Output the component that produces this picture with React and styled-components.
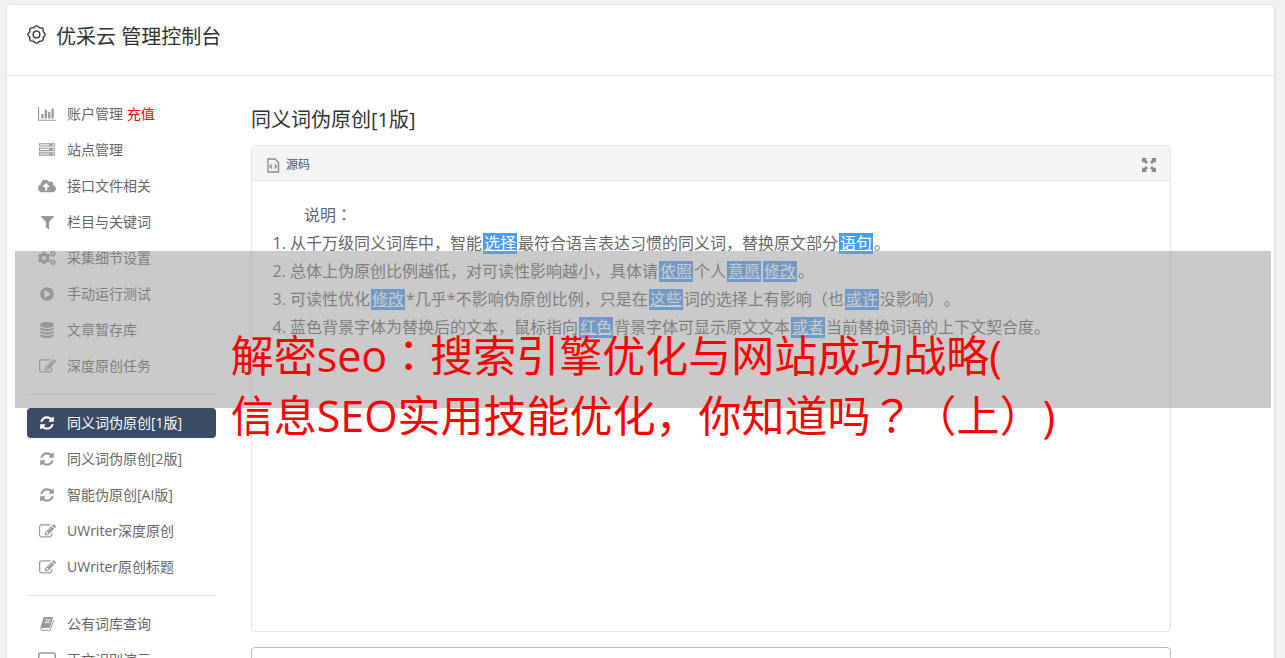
import React from "react";
import styled, { createGlobalStyle } from "styled-components";
import { FaCloudUploadAlt, FaFilter, FaCogs, FaPlayCircle } from "react-icons/fa";

const GlobalStyle = createGlobalStyle`
  *, *::before, *::after { box-sizing: border-box; }
  body {
    margin: 0;
    background: #f1f1f1;
    color: #666;
    font-family: "Open Sans", "Noto Sans CJK SC", sans-serif;
    font-size: 14px;
    text-spacing-trim: space-all;
  }
  html, body { overflow: hidden; height: 100%; }
`;

const Page = styled.div`
  position: relative;
  height: 100vh;
  overflow: hidden;
  padding: 4px 9px 0 6px;
`;

const Card = styled.div`
  min-height: 800px;
  background: #fff;
  border: 1px solid #e5e5e5;
  border-right-width: 2px;
  border-radius: 5px;
`;

const CardHeader = styled.header`
  display: flex;
  align-items: flex-start;
  gap: 10px;
  height: 71px;
  padding: 20px 20px 0;
  border-bottom: 1px solid #e5e5e5;
  color: #333;
`;

const Title = styled.h1`
  margin: 0;
  font-size: 20px;
  line-height: 24px;
  font-weight: 400;
`;

const Columns = styled.div`
  display: flex;
  gap: 35px;
  padding: 23px 20px 0;
`;

const Nav = styled.nav`
  flex: 0 0 189px;
`;

const NavList = styled.ul`
  display: flex;
  flex-direction: column;
  gap: 6px;
  margin: 0;
  padding: 0;
  list-style: none;
`;

const NavLink = styled.a`
  display: flex;
  align-items: center;
  gap: 10px;
  height: 30px;
  padding: 0 10px;
  border-radius: 4px;
  line-height: 20px;
  text-decoration: none;
  white-space: nowrap;
  color: ${(p) => (p.$active ? "#fff" : "#666")};
  background: ${(p) => (p.$active ? "#3b4b66" : "transparent")};
  svg { color: ${(p) => (p.$active ? "#fff" : "#999")}; }
`;

const IconSlot = styled.span`
  display: flex;
  flex: 0 0 20px;
  justify-content: center;
`;

const Recharge = styled.span`
  color: #f00;
`;

const Divider = styled.hr`
  height: 1px;
  margin: 13px 0;
  border: 0;
  background: #ddd;
`;

const Main = styled.main`
  flex: 1 1 0;
  min-width: 0;
  max-width: 920px;
`;

const SectionTitle = styled.h2`
  margin: 0 0 11px;
  padding-top: 7px;
  color: #333;
  font-size: 20px;
  line-height: 28px;
  font-weight: 400;
`;

const Editor = styled.section`
  min-height: 487px;
  border: 1px solid #e5e5e5;
  border-radius: 4px;
`;

const Toolbar = styled.div`
  display: flex;
  align-items: center;
  justify-content: space-between;
  height: 35px;
  padding: 3px 14px 0;
  border-bottom: 1px solid #e5e5e5;
  background: #f4f4f4;
`;

const ToolButton = styled.button`
  display: flex;
  align-items: center;
  gap: 6px;
  padding: 0;
  border: 0;
  background: none;
  color: #555;
  font: inherit;
  font-size: 12px;
  line-height: 16px;
  svg { color: #888; }
`;

const Content = styled.div`
  padding: 20px;
  font-size: 16px;
  line-height: 28px;
`;

const Intro = styled.p`
  margin: 0;
  text-indent: 32px;
`;

const Notes = styled.ol`
  margin: 0;
  padding-left: 18px;
`;

const Swapped = styled.u`
  display: inline-block;
  margin: 0 1px;
  padding: 0 1px;
  background: #4a9df8;
  color: #fff;
  line-height: 21px;
`;

const Mark = styled.span`
  font-family: "Noto Sans CJK TC", sans-serif;
  line-height: 1;
`;

const Output = styled.textarea`
  display: block;
  width: 100%;
  height: 120px;
  margin-top: 15px;
  border: 1px solid #bbb;
  border-radius: 4px;
  resize: none;
`;

const Banner = styled.div`
  position: absolute;
  top: 251px;
  left: 15px;
  right: 14px;
  display: flex;
  justify-content: center;
  height: 157px;
  padding-top: 75px;
  background: rgba(150, 150, 150, 0.5);
`;

const BannerText = styled.p`
  margin: 0;
  color: #f00;
  font-size: 43px;
  line-height: 60px;
  white-space: nowrap;
`;

/* Colons and question marks sit in the middle of their square. */
const typeset = (text) =>
  text.split(/([：？])/).map((part, i) => (i % 2 ? <Mark key={i} lang="zh-TW">{part}</Mark> : part));

const Glyph = ({ box, width, height, d }) => (
  <svg viewBox={box} width={width} height={height} fill="currentColor" aria-hidden="true">
    <path d={d} />
  </svg>
);

const ChartIcon = () => (
  <Glyph box="0 0 2048 1792" width={18} height={16} d="M640 896v512H384V896h256zm384-512v1024H768V384h256zm1024 1152v128H0V128h128v1408h1920zm-640-896v768h-256V640h256zm384-384v1152h-256V256h256z" />
);
const ServerIcon = () => (
  <Glyph box="0 0 1792 1792" width={16} height={16} d="M128 1408h1024v-128H128v128zm0-512h1024V768H128v128zm1568 448q0-40-28-68t-68-28-68 28-28 68 28 68 68 28 68-28 28-68zM128 384h1024V256H128v128zm1568 448q0-40-28-68t-68-28-68 28-28 68 28 68 68 28 68-28 28-68zm0-512q0-40-28-68t-68-28-68 28-28 68 28 68 68 28 68-28 28-68zm96 832v384H0v-384h1792zm0-512v384H0V640h1792zm0-512v384H0V128h1792z" />
);
const DatabaseIcon = () => (
  <Glyph box="0 0 1536 1792" width={14} height={16} d="M768 768q237 0 443-43t325-127v170q0 69-103 128t-280 93.5-385 34.5-385-34.5T103 896 0 768V598q119 84 325 127t443 43zm0 768q237 0 443-43t325-127v170q0 69-103 128t-280 93.5-385 34.5-385-34.5-280-93.5T0 1536v-170q119 84 325 127t443 43zm0-384q237 0 443-43t325-127v170q0 69-103 128t-280 93.5-385 34.5-385-34.5-280-93.5T0 1152V982q119 84 325 127t443 43zM768 0q208 0 385 34.5t280 93.5 103 128v128q0 69-103 128t-280 93.5T768 640t-385-34.5T103 512 0 384V256q0-69 103-128t280-93.5T768 0z" />
);
const RefreshIcon = () => (
  <Glyph box="0 0 1536 1792" width={14} height={16} d="M1511 1056q0 5-1 7-64 268-268 434.5T764 1664q-146 0-282.5-55T238 1452l-129 129q-19 19-45 19t-45-19-19-45v-448q0-26 19-45t45-19h448q26 0 45 19t19 45-19 45l-137 137q71 66 161 102t187 36q134 0 250-65t186-179q11-17 53-117 8-23 30-23h192q13 0 22.5 9.5t9.5 22.5zm25-800v448q0 26-19 45t-45 19h-448q-26 0-45-19t-19-45 19-45l138-138Q969 384 768 384q-134 0-250 65T332 628q-11 17-53 117-8 23-30 23H50q-13 0-22.5-9.5T18 736v-7q65-268 270-434.5T768 128q146 0 284 55.5T1297 340l130-129q19-19 45-19t45 19 19 45z" />
);
const EditIcon = () => (
  <Glyph box="0 0 1792 1792" width={17} height={17} d="M888 1184l116-116-152-152-116 116v56h96v96h56zm440-720q-16-16-33 1l-350 350q-17 17-1 33t33-1l350-350q17-17 1-33zm80 594v190q0 119-84.5 203.5T1120 1536H288q-119 0-203.5-84.5T0 1248V416q0-119 84.5-203.5T288 128h832q63 0 117 25 15 7 18 23 3 17-9 29l-49 49q-14 14-32 8-23-6-45-6H288q-66 0-113 47t-47 113v832q0 66 47 113t113 47h832q66 0 113-47t47-113v-126q0-13 9-22l64-64q15-15 35-7t20 29zm-96-738l288 288-672 672H640V992zm444 132l-92 92-288-288 92-92q28-28 68-28t68 28l152 152q28 28 28 68t-28 68z" />
);
const BookIcon = () => (
  <svg viewBox="0 0 16 16" width="16" height="16" fill="none" stroke="currentColor" aria-hidden="true">
    <path d="M5 1.5h8.5l-3 10H2z" fill="currentColor" />
    <path d="M6.500 4h5M5.800 6.300h5" stroke="#fff" />
    <path d="M2 11.500q-1 2.500 1 2.800h8.200L14.800 4" />
  </svg>
);
const DesktopIcon = () => (
  <svg viewBox="0 0 18 16" width="18" height="16" fill="none" stroke="currentColor" aria-hidden="true">
    <rect x="0.75" y="1" width="16.500" height="11" rx="1.500" strokeWidth="1.500" />
    <path d="M6 14.500h6" strokeWidth="2" />
  </svg>
);
const GearIcon = () => {
  const points = Array.from({ length: 97 }, (_, i) => {
    const a = (i / 96) * Math.PI * 2;
    const r = 7.6 + 0.6 * Math.cos(a * 8);
    return `${(9 + r * Math.sin(a)).toFixed(2)},${(9 - r * Math.cos(a)).toFixed(2)}`;
  }).join(" ");
  return (
    <svg viewBox="0 0 18 18" width="19" height="19" fill="none" stroke="currentColor" strokeWidth="1.300" aria-hidden="true">
      <polygon points={points} />
      <circle cx="9" cy="9" r="3.200" />
    </svg>
  );
};
const SourceIcon = () => (
  <svg viewBox="0 0 14 16" width="14" height="16" fill="none" stroke="currentColor" aria-hidden="true">
    <path d="M2 2h7l3.500 3.500V15H2z" strokeWidth="1.300" />
    <path d="M6 7.500L4 9.500l2 2M8.500 7.500l2 2-2 2" strokeWidth="1.300" />
  </svg>
);
const ExpandIcon = () => (
  <svg viewBox="0 0 14 14" width="14" height="14" fill="currentColor" aria-hidden="true">
    <path d="M0 0h5L3.500 1.500 6 4 4 6 1.500 3.500 0 5zM14 0v5l-1.500-1.500L10 6 8 4l2.500-2.500L9 0zM0 14V9l1.500 1.500L4 8l2 2-2.500 2.500L5 14zM14 14H9l1.500-1.500L8 10l2-2 2.500 2.500L14 9z" />
  </svg>
);

const groups = [
  [
    { label: "账户管理", extra: "充值", icon: <ChartIcon /> },
    { label: "站点管理", icon: <ServerIcon /> },
    { label: "接口文件相关", icon: <FaCloudUploadAlt size={18} /> },
    { label: "栏目与关键词", icon: <FaFilter size={13} /> },
    { label: "采集细节设置", icon: <FaCogs size={18} /> },
    { label: "手动运行测试", icon: <FaPlayCircle size={14} /> },
    { label: "文章暂存库", icon: <DatabaseIcon /> },
    { label: "深度原创任务", icon: <EditIcon /> },
  ],
  [
    { label: "同义词伪原创[1版]", icon: <RefreshIcon />, active: true },
    { label: "同义词伪原创[2版]", icon: <RefreshIcon /> },
    { label: "智能伪原创[AI版]", icon: <RefreshIcon /> },
    { label: "UWriter深度原创", icon: <EditIcon /> },
    { label: "UWriter原创标题", icon: <EditIcon /> },
  ],
  [
    { label: "公有词库查询", icon: <BookIcon /> },
    { label: "正文识别演示", icon: <DesktopIcon /> },
  ],
];

/* Replaced words are the odd entries of each note. */
const notes = [
  ["从千万级同义词库中，智能", "选择", "最符合语言表达习惯的同义词，替换原文部分", "语句", "。"],
  ["总体上伪原创比例越低，对可读性影响越小，具体请", "依照", "个人", "意愿", "", "修改", "。"],
  ["可读性优化", "修改", "*几乎*不影响伪原创比例，只是在", "这些", "词的选择上有影响（也", "或许", "没影响）。"],
  ["蓝色背景字体为替换后的文本，鼠标指向", "红色", "背景字体可显示原文文本", "或者", "当前替换词语的上下文契合度。"],
];

export default function App() {
  return (
    <Page lang="zh-CN">
      <GlobalStyle />
      <Card>
        <CardHeader>
          <GearIcon />
          <Title>优采云 管理控制台</Title>
        </CardHeader>
        <Columns>
          <Nav>
            {groups.map((items, g) => (
              <React.Fragment key={g}>
                {g > 0 && <Divider />}
                <NavList>
                  {items.map((item) => (
                    <li key={item.label}>
                      <NavLink href="#" $active={item.active}>
                        <IconSlot>{item.icon}</IconSlot>
                        <span>
                          {item.label}
                          {item.extra && <> <Recharge>{item.extra}</Recharge></>}
                        </span>
                      </NavLink>
                    </li>
                  ))}
                </NavList>
              </React.Fragment>
            ))}
          </Nav>
          <Main>
            <SectionTitle>同义词伪原创[1版]</SectionTitle>
            <Editor>
              <Toolbar>
                <ToolButton type="button"><SourceIcon />源码</ToolButton>
                <ToolButton type="button" aria-label="全屏"><ExpandIcon /></ToolButton>
              </Toolbar>
              <Content>
                <Intro>{typeset("说明：")}</Intro>
                <Notes>
                  {notes.map((parts, n) => (
                    <li key={n}>
                      {parts.map((part, i) =>
                        i % 2 ? <Swapped key={i}>{part}</Swapped> : <React.Fragment key={i}>{typeset(part)}</React.Fragment>
                      )}
                    </li>
                  ))}
                </Notes>
              </Content>
            </Editor>
            <Output aria-label="原文" />
          </Main>
        </Columns>
      </Card>
      <Banner>
        <BannerText>
          {typeset("解密seo：搜索引擎优化与网站成功战略(")}
          <br />
          {typeset("信息SEO实用技能优化，你知道吗？（上）)")}
        </BannerText>
      </Banner>
    </Page>
  );
}
